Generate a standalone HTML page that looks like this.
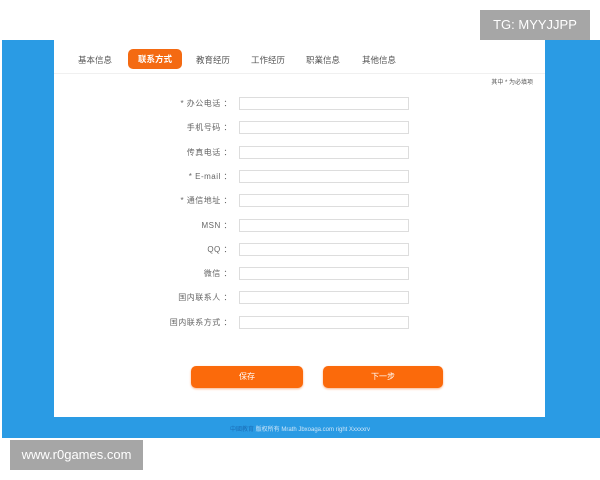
<!DOCTYPE html>
<html><head><meta charset="utf-8"><style>
*{margin:0;padding:0;box-sizing:border-box}
body{width:600px;height:480px;background:#fff;position:relative;overflow:hidden;font-family:"Liberation Sans","Noto Sans CJK SC",sans-serif}
.blue{position:absolute;left:2px;top:40px;width:598px;height:398px;background:#2a9be4}
.panel{position:absolute;left:54px;top:40px;width:491px;height:377px;background:#fff}
.tabs{position:absolute;left:0;top:0;width:100%;height:34px;border-bottom:1px solid #f0f0f0}
.tab{position:absolute;top:14px;font-size:8.5px;color:#555}
.tab.on{top:9px;left:74px;width:54px;height:20px;background:#f46a12;color:#fff;border-radius:5px;text-align:center;line-height:20px;font-weight:bold}
.note{position:absolute;right:12px;top:37px;font-size:6px;color:#555}
.row{position:absolute;left:0;width:100%;height:14px}
.row label{position:absolute;right:313px;width:120px;text-align:right;font-size:8px;color:#666;line-height:14px;letter-spacing:.5px}
.row input{position:absolute;left:185px;width:170px;height:13px;border:1px solid #ddd;background:#fff}
.btn{position:absolute;top:326px;height:22px;background:#fb6a0b;border-radius:5px;color:#fff;font-size:8px;text-align:center;line-height:22px;box-shadow:0 1px 2px #f9b48a}
.foot{position:absolute;left:0;top:424px;width:600px;text-align:center;font-size:6px;color:#cfe6f8}
.tg{position:absolute;left:480px;top:10px;width:110px;height:30px;background:#a6a6a6;color:#fff;font-size:13px;line-height:30px;text-align:center}
.www{position:absolute;left:10px;top:440px;width:133px;height:30px;background:#a6a6a6;color:#fff;font-size:13px;line-height:30px;text-align:center}
</style></head><body>
<div class="blue"></div>
<div class="panel">
<div class="tabs">
<span class="tab" style="left:24px">基本信息</span>
<span class="tab on">联系方式</span>
<span class="tab" style="left:142px">教育经历</span>
<span class="tab" style="left:197px">工作经历</span>
<span class="tab" style="left:252px">职業信息</span>
<span class="tab" style="left:308px">其他信息</span>
</div>
<div class="note">其中 * 为必填项</div>
<div class="row" style="top:57px"><label>* 办公电话 ：</label><input></div>
<div class="row" style="top:81px"><label>手机号码 ：</label><input></div>
<div class="row" style="top:106px"><label>传真电话 ：</label><input></div>
<div class="row" style="top:130px"><label>* E-mail ：</label><input></div>
<div class="row" style="top:154px"><label>* 通信地址 ：</label><input></div>
<div class="row" style="top:179px"><label>MSN ：</label><input></div>
<div class="row" style="top:203px"><label>QQ ：</label><input></div>
<div class="row" style="top:227px"><label>微信 ：</label><input></div>
<div class="row" style="top:251px"><label>国内联系人 ：</label><input></div>
<div class="row" style="top:276px"><label>国内联系方式 ：</label><input></div>
<div class="btn" style="left:137px;width:112px">保存</div>
<div class="btn" style="left:269px;width:120px">下一步</div>
</div>
<div class="foot"><span style="color:#1b6fb8">中國教育</span> 版权所有 Mrath Jbxoaga.com right Xxxxxrv</div>
<div class="tg">TG: MYYJJPP</div>
<div class="www">www.r0games.com</div>
</body></html>
